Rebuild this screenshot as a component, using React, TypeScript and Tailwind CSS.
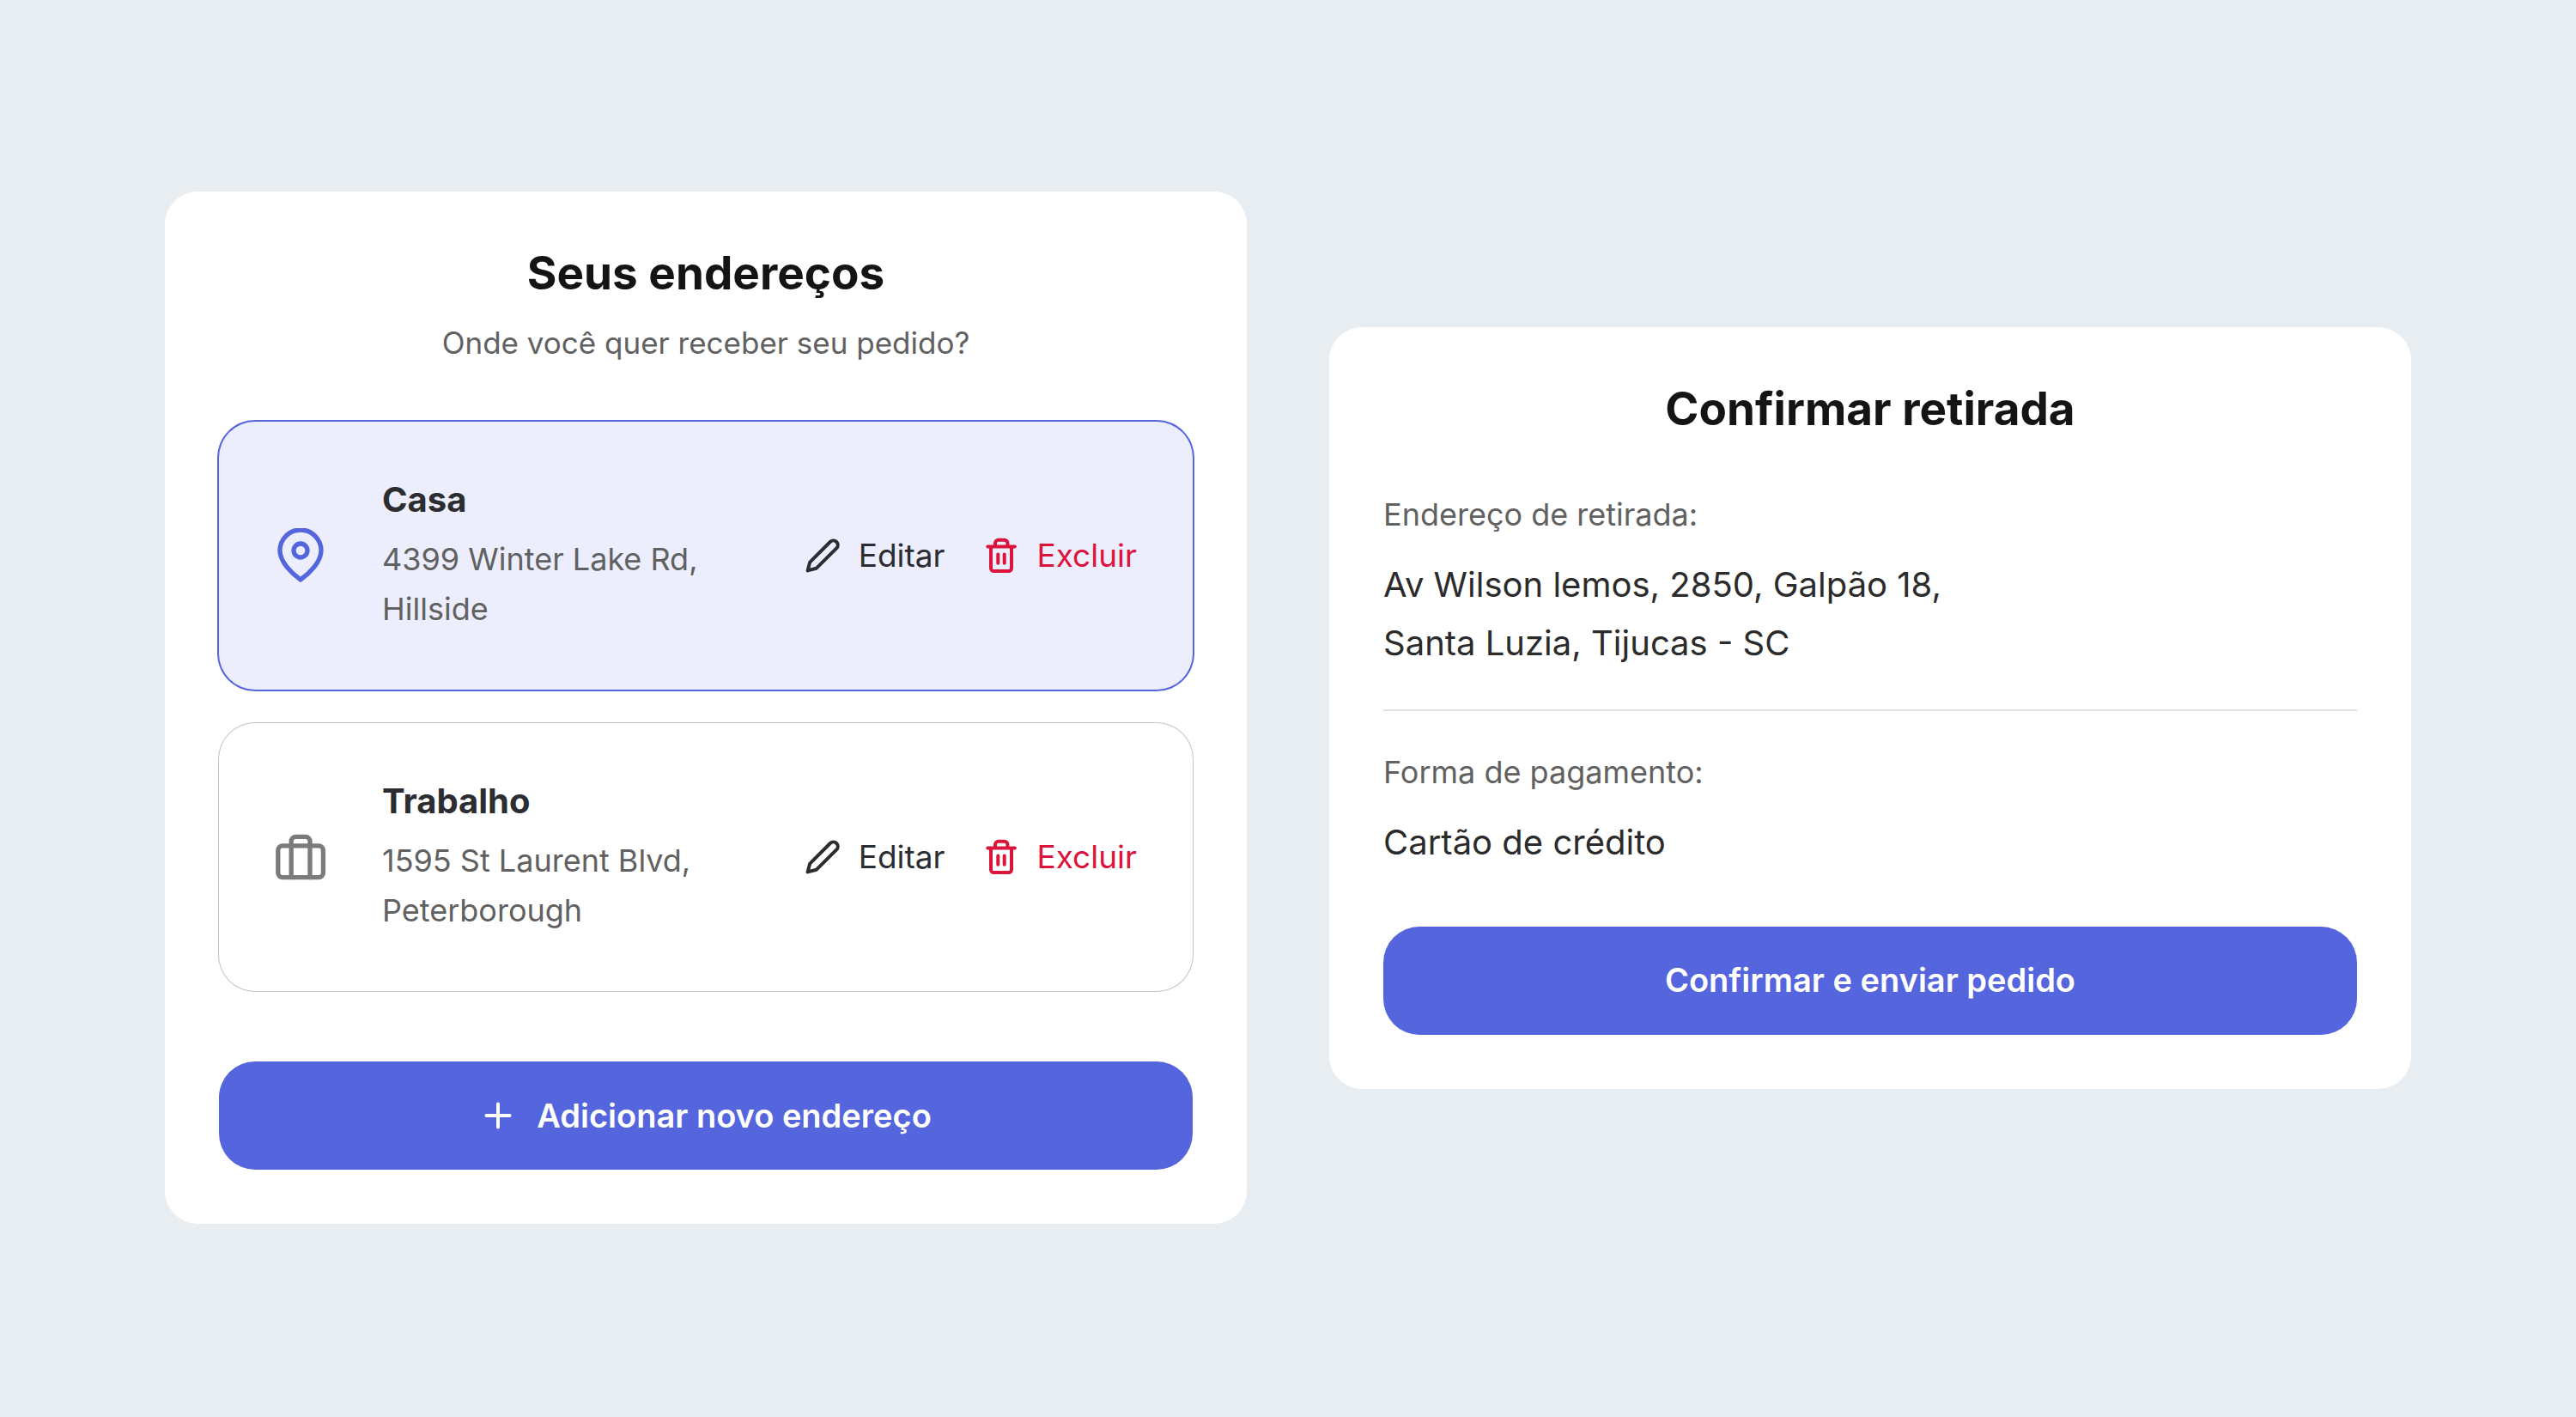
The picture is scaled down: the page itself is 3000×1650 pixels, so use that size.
import type { ReactNode } from "react";

type Address = {
  name: string;
  address: string;
  icon: ReactNode;
  selected: boolean;
};

function PinIcon() {
  return (
    <svg aria-hidden="true" viewBox="0 0 64 64" fill="none" stroke="currentColor" strokeWidth="5.3" strokeLinecap="round" strokeLinejoin="round" className="size-16">
      <path d="M56 26C56 39.4 42 53 32 60C22 53 8 39.4 8 26a24 24 0 0 1 48 0Z" />
      <circle cx="32" cy="26" r="8" />
    </svg>
  );
}

function SuitcaseIcon() {
  return (
    <svg aria-hidden="true" viewBox="0 0 64 64" fill="none" stroke="currentColor" strokeWidth="5.3" strokeLinecap="round" strokeLinejoin="round" className="size-16">
      <rect x="5.8" y="18.8" width="52.6" height="36.8" rx="5.3" />
      <path d="M21.2 55.6V13.6a5.3 5.3 0 0 1 5.3-5.3h11.2a5.3 5.3 0 0 1 5.3 5.3v42" />
    </svg>
  );
}

function PencilIcon() {
  return (
    <svg aria-hidden="true" viewBox="0 0 42 42" fill="none" stroke="currentColor" strokeWidth="4" strokeLinecap="round" strokeLinejoin="round" className="size-[42px]">
      <path d="M3.6 38.4L6.2 28.6L29.8 5a5.2 5.2 0 0 1 7.4 7.4L13.6 35.8Z" />
    </svg>
  );
}

function TrashIcon() {
  return (
    <svg aria-hidden="true" viewBox="0 0 42 42" fill="none" stroke="currentColor" strokeWidth="4" strokeLinecap="round" strokeLinejoin="round" className="size-[42px]">
      <path d="M5.3 10.6h31.6M9 10.6v25a3.5 3.5 0 0 0 3.5 3.5h17a3.5 3.5 0 0 0 3.5-3.5v-25M14 10.6V6.3a3.5 3.5 0 0 1 3.5-3.5h7.4a3.5 3.5 0 0 1 3.5 3.5v4.3M17.3 19.6v10.2M24.7 19.6v10.2" />
    </svg>
  );
}

function PlusIcon() {
  return (
    <svg aria-hidden="true" viewBox="0 0 42 42" fill="none" stroke="currentColor" strokeWidth="4" strokeLinecap="round" className="size-[42px]">
      <path d="M21 7.5v27M7.5 21h27" />
    </svg>
  );
}

function Card({ title, children }: { title: string; children: ReactNode }) {
  return (
    <section className="rounded-[38px] bg-white p-[63px]">
      <h2 className="text-center text-[53px] leading-16 font-bold text-[#141414]">{title}</h2>
      {children}
    </section>
  );
}

function PrimaryButton({ children }: { children: ReactNode }) {
  return (
    <button
      type="button"
      className="flex h-[126px] w-full items-center justify-center gap-6 rounded-[42px] bg-[#5565de] text-[38px] font-semibold text-white"
    >
      {children}
    </button>
  );
}

function AddressRow({ name, address, icon, selected }: Address) {
  return (
    <li
      className={
        selected
          ? "flex items-center gap-[63px] rounded-[42px] bg-[#eceefd] px-[63px] py-[65px] text-[#5565de] ring-2 ring-[#5565de]"
          : "flex items-center gap-[63px] rounded-[42px] px-[63px] py-[65px] text-[#7b7b7b] ring-1 ring-[#c4c4c4]"
      }
    >
      {icon}
      <div className="flex-1">
        <h3 className="text-[40px] leading-[52px] font-bold text-[#2b2d31]">{name}</h3>
        <p className="mt-3.5 text-[36px] leading-[58px] text-[#616161]">{address}</p>
      </div>
      <div className="flex items-center gap-11 pr-0.5 text-[37px]">
        <button type="button" className="flex items-center gap-[21px] text-[#2b2d31]">
          <PencilIcon />
          Editar
        </button>
        <button type="button" className="flex items-center gap-[21px] text-[#dc143c]">
          <TrashIcon />
          Excluir
        </button>
      </div>
    </li>
  );
}

function Detail({ label, children }: { label: string; children: ReactNode }) {
  return (
    <div>
      <dt className="text-[36px] leading-[58px] text-[#616161]">{label}</dt>
      <dd className="mt-[19px] text-[40px] leading-[68px] text-[#2b2b2b]">{children}</dd>
    </div>
  );
}

const addresses: Address[] = [
  { name: "Casa", address: "4399 Winter Lake Rd, Hillside", icon: <PinIcon />, selected: true },
  { name: "Trabalho", address: "1595 St Laurent Blvd, Peterborough", icon: <SuitcaseIcon />, selected: false },
];

export default function App() {
  return (
    <main className="grid min-h-screen grid-cols-2 content-center items-center gap-24 bg-[#e8edf1] px-48 pb-0.5 font-['Inter',sans-serif]">
      <Card title="Seus endereços">
        <p className="mt-5 text-center text-[35px] leading-[58px] text-[#616161]">Onde você quer receber seu pedido?</p>
        <ul className="mt-[63px] mb-[82px] flex flex-col gap-[39px]">
          {addresses.map((item) => (
            <AddressRow key={item.name} {...item} />
          ))}
        </ul>
        <PrimaryButton>
          <PlusIcon />
          Adicionar novo endereço
        </PrimaryButton>
      </Card>

      <Card title="Confirmar retirada">
        <dl className="mt-[62px] mb-16">
          <Detail label="Endereço de retirada:">
            Av Wilson lemos, 2850, Galpão 18,
            <br />
            Santa Luzia, Tijucas - SC
          </Detail>
          <div className="mt-[43px] border-t-2 border-[#e2e2e2] pt-[42px]">
            <Detail label="Forma de pagamento:">Cartão de crédito</Detail>
          </div>
        </dl>
        <PrimaryButton>Confirmar e enviar pedido</PrimaryButton>
      </Card>
    </main>
  );
}
